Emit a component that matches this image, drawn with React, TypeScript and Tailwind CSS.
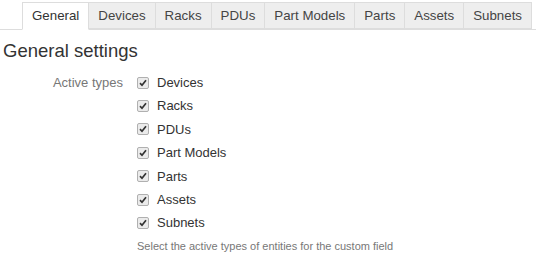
import { useState } from "react"

const tabs = ["General", "Devices", "Racks", "PDUs", "Part Models", "Parts", "Assets", "Subnets"]
const types = ["Devices", "Racks", "PDUs", "Part Models", "Parts", "Assets", "Subnets"]

const Check = ({ checked, onClick }: { checked: boolean; onClick: () => void }) => (
  <span
    onClick={onClick}
    className="w-[12px] h-[12px] border border-[#b0b0b0] rounded-[2px] bg-[#ebebeb] flex items-center justify-center cursor-pointer"
  >
    {checked && (
      <svg width="8" height="8" viewBox="0 0 8 8">
        <path d="M1 4.2 L3 6.3 L7 1.2" fill="none" stroke="#333" strokeWidth="1.7" />
      </svg>
    )}
  </span>
)

export default function App() {
  const [active, setActive] = useState("General")
  const [checked, setChecked] = useState<Record<string, boolean>>(
    Object.fromEntries(types.map(t => [t, true]))
  )

  return (
    <div className="w-[540px] h-[260px] bg-white text-[#333] text-[13px] font-['Liberation_Sans',Arial,sans-serif]">
      <div className="flex pt-[2px] pl-[22px] border-b border-[#ddd] w-[536px] h-[30px] text-[13.3px]">
        {tabs.map(t => (
          <div
            key={t}
            onClick={() => setActive(t)}
            className={
              t === active
                ? "shrink-0 whitespace-nowrap h-[28px] px-[9px] flex items-center bg-white border border-[#ddd] border-b-white cursor-pointer"
                : "shrink-0 whitespace-nowrap h-[27px] px-[9px] flex items-center bg-[#eee] border border-l-0 border-[#ddd] text-[#444] cursor-pointer"
            }
          >
            {t}
          </div>
        ))}
      </div>

      <h2 className="text-[18.5px] leading-[20px] text-[#333] mt-[11px] ml-[3px]">General settings</h2>

      <div className="flex mt-[10px]">
        <div className="w-[123px] text-right text-[#777] leading-[23.4px]">Active types</div>
        <div className="ml-[14px] flex flex-col">
          {types.map(t => (
            <label key={t} className="flex items-center h-[23.4px] gap-[8px]">
              <Check checked={checked[t]} onClick={() => setChecked({ ...checked, [t]: !checked[t] })} />
              <span>{t}</span>
            </label>
          ))}
          <p className="text-[11px] text-[#777] mt-[3px]">Select the active types of entities for the custom field</p>
        </div>
      </div>
    </div>
  )
}
